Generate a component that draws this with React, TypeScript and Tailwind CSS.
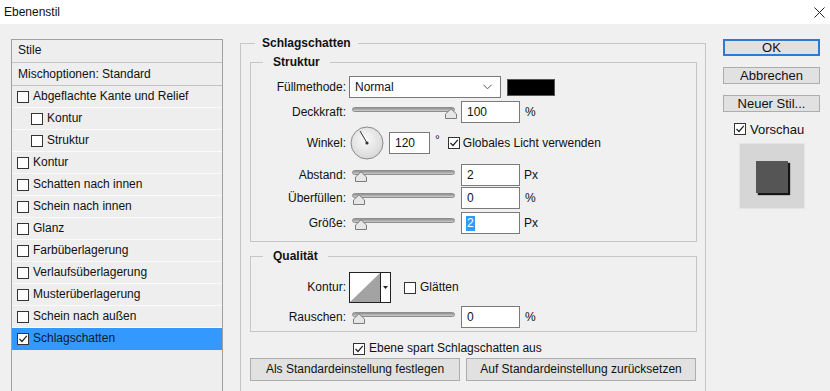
import { ReactNode } from "react";

const STYLES: { label: string; checked?: boolean; indent?: boolean }[] = [
    { label: "Abgeflachte Kante und Relief" },
    { label: "Kontur", indent: true },
    { label: "Struktur", indent: true },
    { label: "Kontur" },
    { label: "Schatten nach innen" },
    { label: "Schein nach innen" },
    { label: "Glanz" },
    { label: "Farbüberlagerung" },
    { label: "Verlaufsüberlagerung" },
    { label: "Musterüberlagerung" },
    { label: "Schein nach außen" },
    { label: "Schlagschatten", checked: true },
];

const Check = ({ checked = false }: { checked?: boolean }) => (
    <span className="w-[12px] h-[12px] shrink-0 border border-[#333333] bg-white flex items-center justify-center">
        {checked && (
            <svg width="10" height="10" viewBox="0 0 10 10">
                <path d="M1.5 5 L4 7.5 L8.8 1.8" fill="none" stroke="#222" strokeWidth="1.2" />
            </svg>
        )}
    </span>
);

const Field = ({ children, w = "w-[59px]" }: { children: ReactNode; w?: string }) => (
    <div className={`${w} h-[22px] bg-white border border-[#7a7a7a] flex items-center pl-[5px] shrink-0`}>
        {children}
    </div>
);

// track + thumb, thumb pulled up over the track
const Slider = ({ value }: { value: number }) => (
    <div className="w-[103px] h-[22px] shrink-0 flex flex-col">
        <div className="mt-[6px] h-[5px] rounded-full border border-[#8e8e8e] bg-linear-to-b from-[#8f8f8f] to-[#cdcdcd]" />
        <svg
            className="-mt-[4px]"
            style={{ marginLeft: 1 + (value / 100) * 92 }}
            width="12"
            height="11"
            viewBox="0 0 12 11"
        >
            <path d="M0.5 10.5 V6 L6 0.8 L11.5 6 V10.5 Z" fill="#e6e6e6" stroke="#7c7c7c" />
        </svg>
    </div>
);

const Label = ({ children }: { children: ReactNode }) => (
    <span className="w-[95px] shrink-0 text-right">{children}</span>
);

const SideButton = ({ children, focused = false }: { children: ReactNode; focused?: boolean }) => (
    <div
        className={`w-[97px] h-[17px] flex items-center justify-center bg-[#e1e1e1] text-[13px] leading-none ${
            focused ? "border-2 border-[#2f7ad0]" : "border border-[#adadad]"
        }`}
    >
        {children}
    </div>
);

export default function App() {
    return (
        <div
            className="w-[830px] h-[391px] overflow-hidden bg-[#f0f0f0] text-[12px] leading-[15px] text-[#111]"
            style={{ fontFamily: '"Liberation Sans", Arial, sans-serif' }}
        >
            {/* title bar */}
            <div className="h-[24px] bg-white flex items-center justify-between pl-[4px] pr-[5px]">
                <span>Ebenenstil</span>
                <svg width="11" height="11" viewBox="0 0 11 11">
                    <path d="M0.5 0.5 L10.5 10.5 M10.5 0.5 L0.5 10.5" stroke="#222" strokeWidth="1" />
                </svg>
            </div>

            <div className="flex">
                {/* styles list */}
                <div className="ml-[11px] mt-[15px] w-[212px] h-[400px] border border-[#a0a0a0] bg-[#eeeeee]">
                    <div className="h-[23px] pt-[3px] pl-[6px] border-b border-[#c2c2c2]">Stile</div>
                    <div className="h-[23px] flex items-center pl-[6px] border-b border-[#c2c2c2]">
                        Mischoptionen: Standard
                    </div>
                    {STYLES.map((s, i) => (
                        <div
                            key={i}
                            className={`h-[22px] flex items-center gap-[4px] border-b ${
                                s.indent ? "pl-[19px]" : "pl-[5px]"
                            } ${s.checked ? "bg-[#3399ff] border-[#3399ff] text-[#0c1a33]" : "border-[#fafafa]"}`}
                        >
                            <Check checked={s.checked} />
                            <span>{s.label}</span>
                        </div>
                    ))}
                </div>

                {/* main panel */}
                <fieldset className="ml-[17px] mt-[11px] w-[466px] h-[400px] border border-[#c6c6c6] pl-[9px] pr-[8px]">
                    <legend className="ml-[5px] px-[7px] font-bold leading-[16px]">Schlagschatten</legend>

                    <fieldset className="mt-[3px] border border-[#c6c6c6] pb-[7px]">
                        <legend className="ml-[12px] px-[10px] font-bold leading-[16px]">Struktur</legend>
                        <div className="pt-[6px] flex flex-col">
                            <div className="h-[22px] flex items-center">
                                <Label>Füllmethode:</Label>
                                <div className="ml-[3px] w-[152px] h-[22px] bg-white border border-[#7a7a7a] flex items-center justify-between pl-[5px] pr-[8px]">
                                    <span>Normal</span>
                                    <svg width="9" height="6" viewBox="0 0 9 6">
                                        <path d="M0.5 0.8 L4.5 4.8 L8.5 0.8" fill="none" stroke="#555" />
                                    </svg>
                                </div>
                                <div className="ml-[6px] w-[48px] h-[17px] bg-black border border-[#555]" />
                            </div>

                            <div className="mt-[3px] h-[22px] flex items-center">
                                <Label>Deckkraft:</Label>
                                <div className="ml-[6px]">
                                    <Slider value={100} />
                                </div>
                                <div className="ml-[6px]">
                                    <Field>100</Field>
                                </div>
                                <span className="ml-[5px]">%</span>
                            </div>

                            <div className="mt-[3px] h-[34px] flex items-center">
                                <Label>Winkel:</Label>
                                <svg className="ml-[4px] shrink-0" width="34" height="34" viewBox="0 0 34 34">
                                    <defs>
                                        <radialGradient id="dial" cx="0.45" cy="0.4" r="0.6">
                                            <stop offset="0" stopColor="#fafafa" />
                                            <stop offset="1" stopColor="#d8d8d8" />
                                        </radialGradient>
                                    </defs>
                                    <circle cx="17" cy="17" r="16" fill="url(#dial)" stroke="#8a8a8a" />
                                    <path d="M17 17 L10 5" stroke="#333" strokeWidth="1" />
                                    <circle cx="17" cy="17" r="1.6" fill="#333" />
                                </svg>
                                <div className="ml-[5px]">
                                    <Field w="w-[41px]">120</Field>
                                </div>
                                <span className="ml-[5px] -mt-[6px]">°</span>
                                <div className="ml-[8px] flex items-center gap-[3px]">
                                    <Check checked />
                                    <span>Globales Licht verwenden</span>
                                </div>
                            </div>

                            <div className="mt-[4px] h-[22px] flex items-center">
                                <Label>Abstand:</Label>
                                <div className="ml-[6px]">
                                    <Slider value={2} />
                                </div>
                                <div className="ml-[6px]">
                                    <Field>2</Field>
                                </div>
                                <span className="ml-[4px]">Px</span>
                            </div>

                            <div className="mt-[1px] h-[22px] flex items-center">
                                <Label>Überfüllen:</Label>
                                <div className="ml-[6px]">
                                    <Slider value={0} />
                                </div>
                                <div className="ml-[6px]">
                                    <Field>0</Field>
                                </div>
                                <span className="ml-[5px]">%</span>
                            </div>

                            <div className="mt-[3px] h-[22px] flex items-center">
                                <Label>Größe:</Label>
                                <div className="ml-[6px]">
                                    <Slider value={2} />
                                </div>
                                <div className="ml-[6px]">
                                    <Field>
                                        <span className="bg-[#3399ff] text-white px-[1px] -ml-[1px]">2</span>
                                    </Field>
                                </div>
                                <span className="ml-[4px]">Px</span>
                            </div>
                        </div>
                    </fieldset>

                    <fieldset className="mt-[6px] border border-[#c6c6c6] pb-[3px]">
                        <legend className="ml-[12px] px-[10px] font-bold leading-[16px]">Qualität</legend>
                        <div className="pt-[8px] flex flex-col">
                            <div className="h-[31px] flex items-center">
                                <Label>Kontur:</Label>
                                <svg className="ml-[3px] shrink-0" width="42" height="31" viewBox="0 0 42 31">
                                    <rect x="0.5" y="0.5" width="41" height="30" fill="#fff" stroke="#222" />
                                    <path d="M1 30 L31 1 V30 Z" fill="#a3a3a3" />
                                    <path d="M31.5 1 V30" stroke="#222" />
                                    <path d="M34 14 H39 L36.5 17 Z" fill="#222" />
                                </svg>
                                <div className="ml-[13px] flex items-center gap-[4px]">
                                    <Check />
                                    <span>Glätten</span>
                                </div>
                            </div>
                            <div className="mt-[3px] h-[22px] flex items-center">
                                <Label>Rauschen:</Label>
                                <div className="ml-[6px]">
                                    <Slider value={0} />
                                </div>
                                <div className="ml-[6px]">
                                    <Field>0</Field>
                                </div>
                                <span className="ml-[5px]">%</span>
                            </div>
                        </div>
                    </fieldset>

                    <div className="mt-[9px] h-[15px] flex items-center gap-[4px] ml-[103px]">
                        <Check checked />
                        <span>Ebene spart Schlagschatten aus</span>
                    </div>

                    <div className="mt-[2px] flex justify-between pr-[1px]">
                        <div className="w-[210px] h-[23px] bg-[#e1e1e1] border border-[#adadad] flex items-center justify-center">
                            Als Standardeinstellung festlegen
                        </div>
                        <div className="w-[230px] h-[23px] bg-[#e1e1e1] border border-[#adadad] flex items-center justify-center">
                            Auf Standardeinstellung zurücksetzen
                        </div>
                    </div>
                </fieldset>

                {/* right column */}
                <div className="ml-[17px] mt-[15px] w-[97px] flex flex-col">
                    <SideButton focused>OK</SideButton>
                    <div className="mt-[11px]">
                        <SideButton>Abbrechen</SideButton>
                    </div>
                    <div className="mt-[11px]">
                        <SideButton>Neuer Stil...</SideButton>
                    </div>
                    <div className="mt-[10px] h-[14px] ml-[11px] flex items-center gap-[4px]">
                        <Check checked />
                        <span className="text-[13px]">Vorschau</span>
                    </div>
                    <div className="mt-[7px] ml-[16px] w-[66px] h-[66px] bg-[#d6d6d6] border border-[#e4e4e4] pl-[16px] pt-[17px]">
                        <div className="w-[32px] h-[32px] bg-[#555555] shadow-[2px_2px_1px_rgba(0,0,0,0.9)]" />
                    </div>
                </div>
            </div>
        </div>
    );
}
